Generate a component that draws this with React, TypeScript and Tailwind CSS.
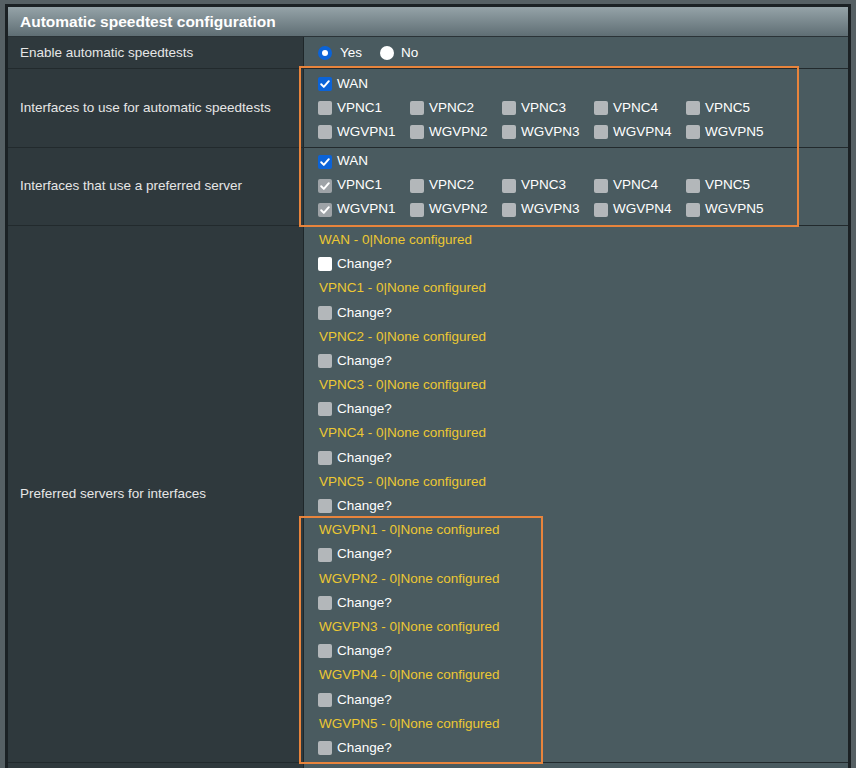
import React from "react";

type CbState = "off" | "on" | "dis" | "white";

function Check({ state }: { state: CbState }) {
  const bg =
    state === "on"
      ? "bg-[#0b63d8]"
      : state === "dis"
      ? "bg-[#9ea3a7]"
      : state === "white"
      ? "bg-[#ffffff]"
      : "bg-[#b3b7ba]";
  return (
    <span
      className={`inline-flex items-center justify-center w-[14px] h-[14px] rounded-[2px] shrink-0 ${bg}`}
    >
      {(state === "on" || state === "dis") && (
        <svg width="12" height="12" viewBox="0 0 12 12">
          <path
            d="M2.2 6.3 L4.8 8.9 L9.8 3.2"
            stroke="#ffffff"
            strokeWidth="2"
            fill="none"
            strokeLinecap="round"
            strokeLinejoin="round"
          />
        </svg>
      )}
    </span>
  );
}

function Item({ label, state }: { label: string; state: CbState }) {
  return (
    <div className="flex items-center w-[92px] h-[24px]">
      <Check state={state} />
      <span className="ml-[5px] text-white">{label}</span>
    </div>
  );
}

const vpnc = ["VPNC1", "VPNC2", "VPNC3", "VPNC4", "VPNC5"];
const wg = ["WGVPN1", "WGVPN2", "WGVPN3", "WGVPN4", "WGVPN5"];

function IfaceGrid({ preferred }: { preferred: boolean }) {
  return (
    <div className="flex flex-col">
      <div className="flex">
        <Item label="WAN" state="on" />
      </div>
      <div className="flex">
        {vpnc.map((v, i) => (
          <Item key={v} label={v} state={preferred && i === 0 ? "dis" : "off"} />
        ))}
      </div>
      <div className="flex">
        {wg.map((v, i) => (
          <Item key={v} label={v} state={preferred && i === 0 ? "dis" : "off"} />
        ))}
      </div>
    </div>
  );
}

const servers = ["WAN", ...vpnc, ...wg];

export default function App() {
  return (
    <div
      className="min-h-screen bg-[#566064] pl-[5px] pt-[4px] pr-[5px] text-[13.5px]"
      style={{ fontFamily: '"Liberation Sans", Arial, sans-serif' }}
    >
      <div className="relative border-l-[3px] border-t-[3px] border-r-[3px] border-[#1b2124]">
        {/* header */}
        <div className="h-[30px] flex items-center pl-[12px] bg-[linear-gradient(#95a3a8,#5f6e74)] border-b border-[#2a3337]">
          <span className="font-bold text-[15.5px] text-white">Automatic speedtest configuration</span>
        </div>

        {/* row 1 */}
        <div className="flex border-b border-[#222a2d]">
          <div className="w-[296px] shrink-0 bg-[#2f393d] border-r border-[#1f272a] pl-[12px] pt-[1px] flex items-center text-[#e6e6e6]">
            Enable automatic speedtests
          </div>
          <div className="flex-1 bg-[#4a5b60] h-[31px] pt-[1px] flex items-center pl-[14px] text-white">
            <span className="w-[14px] h-[14px] rounded-full bg-[#0b63d8] flex items-center justify-center">
              <span className="w-[6px] h-[6px] rounded-full bg-white" />
            </span>
            <span className="ml-[8px]">Yes</span>
            <span className="ml-[18px] w-[14px] h-[14px] rounded-full bg-white" />
            <span className="ml-[7px]">No</span>
          </div>
        </div>

        {/* row 2 */}
        <div className="flex border-b border-[#222a2d]">
          <div className="w-[296px] shrink-0 bg-[#2f393d] border-r border-[#1f272a] pl-[12px] flex items-center text-[#e6e6e6]">
            Interfaces to use for automatic speedtests
          </div>
          <div className="flex-1 bg-[#4a5b60] h-[78px] flex items-center pl-[14px]">
            <IfaceGrid preferred={false} />
          </div>
        </div>

        {/* row 3 */}
        <div className="flex border-b border-[#222a2d]">
          <div className="w-[296px] shrink-0 bg-[#2f393d] border-r border-[#1f272a] pl-[12px] flex items-center text-[#e6e6e6]">
            Interfaces that use a preferred server
          </div>
          <div className="flex-1 bg-[#4a5b60] h-[77px] flex items-center pl-[14px] pb-[2px]">
            <IfaceGrid preferred={true} />
          </div>
        </div>

        {/* row 4 */}
        <div className="flex border-b border-[#222a2d]">
          <div className="w-[296px] shrink-0 bg-[#2f393d] border-r border-[#1f272a] pl-[12px] flex items-center text-[#e6e6e6]">
            Preferred servers for interfaces
          </div>
          <div className="flex-1 bg-[#4a5b60] pl-[14px] pt-[2px] pb-[2px]">
            {servers.map((s, i) => (
              <div key={s}>
                <div className="h-[24.2px] flex items-center pl-[1px] text-[#ecc833]">
                  {s} - 0|None configured
                </div>
                <div className="h-[24.2px] flex items-center">
                  <Check state={i === 0 ? "white" : "off"} />
                  <span className="ml-[5px] text-white">Change?</span>
                </div>
              </div>
            ))}
          </div>
        </div>

        {/* next row (cut off) */}
        <div className="flex">
          <div className="w-[296px] shrink-0 bg-[#2f393d] border-r border-[#1f272a] h-[30px]" />
          <div className="flex-1 bg-[#4a5b60] h-[30px]" />
        </div>

        {/* annotation boxes */}
        <div className="absolute left-[291px] top-[59px] w-[500px] h-[161px] border-2 border-[#e8843c] pointer-events-none" />
        <div className="absolute left-[291px] top-[509px] w-[244px] h-[248px] border-2 border-[#e8843c] pointer-events-none" />
      </div>
    </div>
  );
}
